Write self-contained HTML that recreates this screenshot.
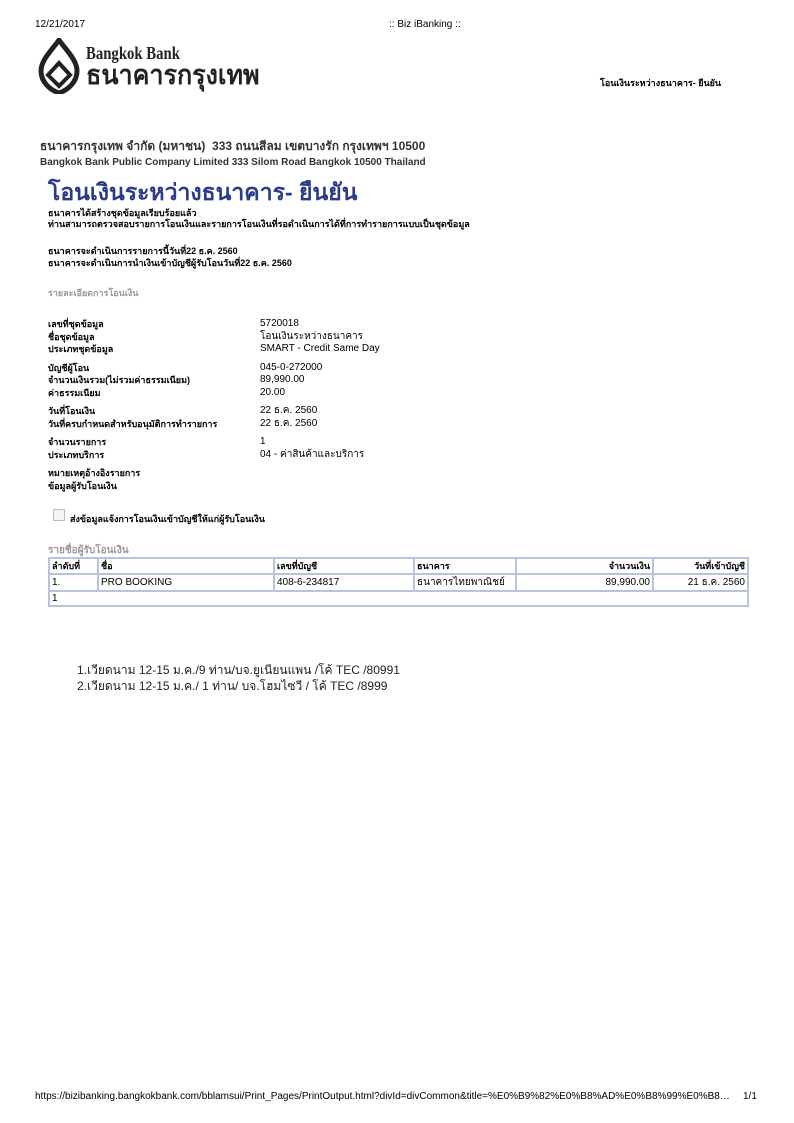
<!DOCTYPE html>
<html><head><meta charset="utf-8"><style>
body{margin:0;width:794px;height:1123px;position:relative;background:#fff;font-family:"Liberation Sans","DejaVu Sans",sans-serif;color:#000;overflow:hidden}
.a{position:absolute;white-space:nowrap}
.s{font-size:10px}
.b{font-weight:bold;font-size:9px}
table{position:absolute;left:48px;top:557px;width:701px;border-collapse:collapse;font-size:10px}
td{border:2px solid #b8c4dc;padding:0 2px;height:13px}
th{border:2px solid #b8c4dc;padding:0 2px;height:12px;font-size:9px;text-align:left}
</style></head><body>
<div class="a s" style="left:35px;top:19px">12/21/2017</div>
<div class="a s" style="left:389px;top:19px">:: Biz iBanking ::</div>
<svg class="a" style="left:38px;top:38px" width="42" height="56" viewBox="0 0 42 56">
<path d="M21 2 C14 12 3 22 3 33 C3 44 12 52 21 55 C30 52 39 44 39 33 C39 22 28 12 21 2 Z" fill="none" stroke="#222" stroke-width="5"/>
<path d="M21 25 L10 37 L21 48 L32 37 Z" fill="none" stroke="#222" stroke-width="4"/>
</svg>
<div class="a" style="left:86px;top:43px;font-size:18px;font-weight:bold;color:#222;transform:scaleX(0.82);transform-origin:0 0;font-family:'Liberation Serif',serif">Bangkok Bank</div>
<div class="a" style="left:86px;top:59px;font-size:27px;font-weight:bold;color:#222;transform:scaleX(0.93);transform-origin:0 0;line-height:32px">ธนาคารกรุงเทพ</div>
<div class="a b" style="left:600px;top:76px">โอนเงินระหว่างธนาคาร- ยืนยัน</div>
<div class="a" style="left:40px;top:137px;font-size:12px;font-weight:bold;color:#333">ธนาคารกรุงเทพ จำกัด (มหาชน)&nbsp; 333 ถนนสีลม เขตบางรัก กรุงเทพฯ 10500</div>
<div class="a" style="left:40px;top:157px;font-size:10px;font-weight:bold;color:#333">Bangkok Bank Public Company Limited 333 Silom Road Bangkok 10500 Thailand</div>
<div class="a" style="left:48px;top:178px;font-size:23px;line-height:28px;font-weight:bold;color:#2a3b8a">โอนเงินระหว่างธนาคาร- ยืนยัน</div>
<div class="a b" style="left:48px;top:208px;line-height:11px">ธนาคารได้สร้างชุดข้อมูลเรียบร้อยแล้ว<br>ท่านสามารถตรวจสอบรายการโอนเงินและรายการโอนเงินที่รอดำเนินการได้ที่การทำรายการแบบเป็นชุดข้อมูล</div>
<div class="a b" style="left:48px;top:245px;line-height:12px">ธนาคารจะดำเนินการรายการนี้วันที่22 ธ.ค. 2560<br>ธนาคารจะดำเนินการนำเงินเข้าบัญชีผู้รับโอนวันที่22 ธ.ค. 2560</div>
<div class="a b" style="left:48px;top:286px;color:#999">รายละเอียดการโอนเงิน</div>
<div class="a b" style="left:48px;top:318px;line-height:12.5px">เลขที่ชุดข้อมูล<br>ชื่อชุดข้อมูล<br>ประเภทชุดข้อมูล<br><div style="height:6px"></div>บัญชีผู้โอน<br>จำนวนเงินรวม(ไม่รวมค่าธรรมเนียม)<br>ค่าธรรมเนียม<br><div style="height:6px"></div>วันที่โอนเงิน<br>วันที่ครบกำหนดสำหรับอนุมัติการทำรายการ<br><div style="height:6px"></div>จำนวนรายการ<br>ประเภทบริการ<br><div style="height:6px"></div>หมายเหตุอ้างอิงรายการ<br>ข้อมูลผู้รับโอนเงิน</div>
<div class="a s" style="left:260px;top:318px;line-height:12.5px">5720018<br>โอนเงินระหว่างธนาคาร<br>SMART - Credit Same Day<br><div style="height:6px"></div>045-0-272000<br>89,990.00<br>20.00<br><div style="height:6px"></div>22 ธ.ค. 2560<br>22 ธ.ค. 2560<br><div style="height:6px"></div>1<br>04 - ค่าสินค้าและบริการ</div>
<div class="a" style="left:53px;top:509px;width:10px;height:10px;border:1px solid #bbb;background:#f4f4f4"></div>
<div class="a b" style="left:70px;top:512px">ส่งข้อมูลแจ้งการโอนเงินเข้าบัญชีให้แก่ผู้รับโอนเงิน</div>
<div class="a b" style="left:48px;top:543px;color:#999;font-size:10px">รายชื่อผู้รับโอนเงิน</div>
<table>
<tr><th style="width:43px">ลำดับที่</th><th style="width:170px">ชื่อ</th><th style="width:134px">เลขที่บัญชี</th><th style="width:96px">ธนาคาร</th><th style="text-align:right">จำนวนเงิน</th><th style="text-align:right;width:89px">วันที่เข้าบัญชี</th></tr>
<tr><td>1.</td><td>PRO BOOKING</td><td>408-6-234817</td><td>ธนาคารไทยพาณิชย์</td><td style="text-align:right">89,990.00</td><td style="text-align:right">21 ธ.ค. 2560</td></tr>
<tr><td colspan="6">1</td></tr>
</table>
<div class="a" style="left:77px;top:662px;font-size:12px;line-height:16px;color:#222">1.เวียดนาม 12-15 ม.ค./9 ท่าน/บจ.ยูเนียนแพน /โค้ TEC /80991<br>2.เวียดนาม 12-15 ม.ค./ 1 ท่าน/ บจ.โฮมไซวี / โค้ TEC /8999</div>
<div class="a s" style="left:35px;top:1091px;width:696px;overflow:hidden;text-overflow:ellipsis">https://bizibanking.bangkokbank.com/bblamsui/Print_Pages/PrintOutput.html?divId=divCommon&amp;title=%E0%B9%82%E0%B8%AD%E0%B8%99%E0%B8%99%E0%B8%99%E0%B8%99</div>
<div class="a s" style="left:743px;top:1091px">1/1</div>
</body></html>
